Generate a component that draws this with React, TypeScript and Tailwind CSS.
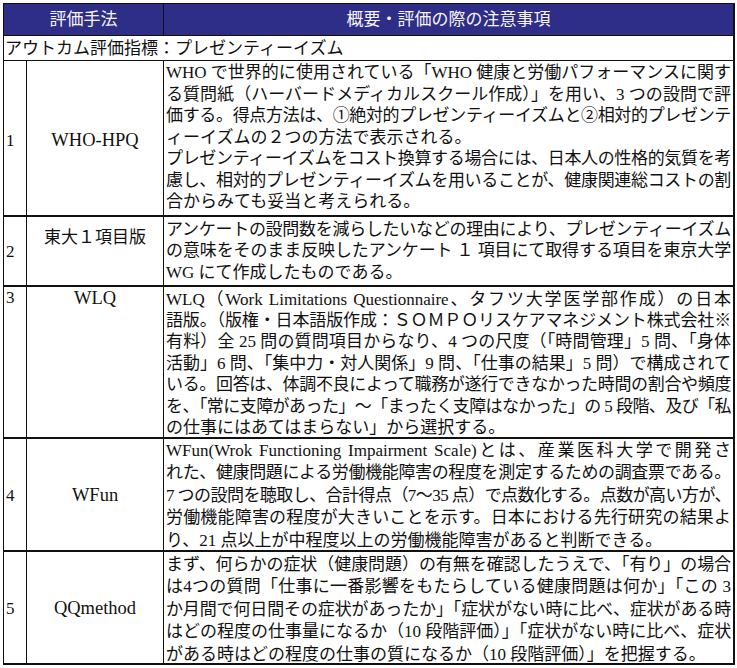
import { useLayoutEffect, useRef, useState } from 'react'

type Row = {
  no: string
  name: string
  h: string
  body: string
  noCell: string
  nameCell: string
  lines: [string, boolean][]
}

const rows: Row[] = [
  {
    no: '1',
    name: 'WHO-HPQ',
    h: 'h-[155px]',
    body: 'pt-[1px] leading-[21.5px] h-[148px]',
    noCell: 'align-middle pt-[5px]',
    nameCell: 'align-middle pt-[5px] text-[18.5px]',
    lines: [
      ['WHO で世界的に使用されている「WHO 健康と労働パフォーマンスに関す', true],
      ['る質問紙（ハーバードメディカルスクール作成）」を用い、3 つの設問で評', true],
      ['価する。得点方法は、①絶対的プレゼンティーイズムと②相対的プレゼンテ', true],
      ['ィーイズムの２つの方法で表示される。', false],
      ['プレゼンティーイズムをコスト換算する場合には、日本人の性格的気質を考', true],
      ['慮し、相対的プレゼンティーイズムを用いることが、健康関連総コストの割', true],
      ['合からみても妥当と考えられる。', false],
    ],
  },
  {
    no: '2',
    name: '東大１項目版',
    h: 'h-[70px]',
    body: 'pt-[2px] leading-[21.5px] h-[62px]',
    noCell: 'align-middle pt-[2px]',
    nameCell: 'align-top pt-[12px]',
    lines: [
      ['アンケートの設問数を減らしたいなどの理由により、プレゼンティーイズム', true],
      ['の意味をそのまま反映したアンケート １ 項目にて取得する項目を東京大学', true],
      ['WG にて作成したものである。', false],
    ],
  },
  {
    no: '3',
    name: 'WLQ',
    h: 'h-[152px]',
    body: 'pt-[2px] leading-[21.4px] h-[145px]',
    noCell: 'align-top pt-[2px]',
    nameCell: 'align-top pt-[2px] text-[18.5px]',
    lines: [
      ['WLQ（Work Limitations Questionnaire、タフツ大学医学部作成）の日本', true],
      ['語版。（版権・日本語版作成：ＳＯＭＰＯリスケアマネジメント株式会社※', true],
      ['有料）全 25 問の質問項目からなり、4 つの尺度（「時間管理」5 問、「身体', true],
      ['活動」6 問、「集中力・対人関係」9 問、「仕事の結果」5 問）で構成されて', true],
      ['いる。回答は、体調不良によって職務が遂行できなかった時間の割合や頻度', true],
      ['を、「常に支障があった」～「まったく支障はなかった」の 5 段階、及び「私', true],
      ['の仕事にはあてはまらない」から選択する。', false],
    ],
  },
  {
    no: '4',
    name: 'WFun',
    h: 'h-[113px]',
    body: 'pt-[1px] leading-[22.6px] h-[106px]',
    noCell: 'align-middle pt-[2px]',
    nameCell: 'align-middle pt-[2px] text-[18.5px]',
    lines: [
      ['WFun(Wrok Functioning Impairment Scale)とは、産業医科大学で開発さ', true],
      ['れた、健康問題による労働機能障害の程度を測定するための調査票である。', true],
      ['7 つの設問を聴取し、合計得点（7～35 点）で点数化する。点数が高い方が、', true],
      ['労働機能障害の程度が大きいことを示す。日本における先行研究の結果よ', true],
      ['り、21 点以上が中程度以上の労働機能障害があると判断できる。', false],
    ],
  },
  {
    no: '5',
    name: 'QQmethod',
    h: 'h-[113px]',
    body: 'pt-[2px] leading-[22.5px] h-[106px]',
    noCell: 'align-middle pt-[2px]',
    nameCell: 'align-middle pt-[2px] text-[18.5px]',
    lines: [
      ['まず、何らかの症状（健康問題）の有無を確認したうえで、「有り」の場合', true],
      ['は4つの質問「仕事に一番影響をもたらしている健康問題は何か」「この 3', true],
      ['か月間で何日間その症状があったか」「症状がない時に比べ、症状がある時', true],
      ['はどの程度の仕事量になるか（10 段階評価）」「症状がない時に比べ、症状', true],
      ['がある時はどの程度の仕事の質になるか（10 段階評価）」を把握する。', false],
    ],
  },
]

// squeezes a line that is too long for the cell, the rest is justified by css
function Line({ text, full }: { text: string; full: boolean }) {
  const ref = useRef<HTMLDivElement>(null)
  const [ls, setLs] = useState<number | null>(null)
  useLayoutEffect(() => {
    const el = ref.current
    if (!el) return
    const over = el.scrollWidth - el.clientWidth
    if (over > 0) setLs(-(over + 1) / [...text].length)
  }, [text])
  return (
    <div
      ref={ref}
      style={ls !== null ? { letterSpacing: ls } : undefined}
      className={full ? 'whitespace-nowrap text-justify [text-align-last:justify]' : 'whitespace-nowrap'}
    >
      {text}
    </div>
  )
}

export default function App() {
  return (
    <div className="bg-white min-h-[668px] pt-[3px] pl-[3px] text-[17px] text-[#111] font-['Liberation_Serif','Noto_Sans_CJK_JP',serif]">
      <table className="w-[732px] table-fixed border-collapse">
        <colgroup>
          <col className="w-[23px]" />
          <col className="w-[137px]" />
          <col />
        </colgroup>
        <thead>
          <tr className="h-[32px] bg-[#2e2d87] text-[#f5f5f5]">
            <th colSpan={2} className="border border-[#111] p-0 font-normal text-center leading-none">評価手法</th>
            <th className="border border-[#111] border-r-2 p-0 font-normal text-center leading-none">概要・評価の際の注意事項</th>
          </tr>
        </thead>
        <tbody>
          <tr className="h-[25px]">
            <td colSpan={3} className="border border-[#111] border-r-2 p-0 pl-[1px] leading-none">
              アウトカム評価指標：プレゼンティーイズム
            </td>
          </tr>
          {rows.map((r) => (
            <tr key={r.no} className={r.h}>
              <td className={`border border-[#111] border-b-2 p-0 pl-[2px] leading-none ${r.noCell}`}>{r.no}</td>
              <td className={`border border-[#111] border-b-2 p-0 text-center leading-none ${r.nameCell}`}>{r.name}</td>
              <td className="border border-[#111] border-b-2 border-r-2 p-0 px-[2px] align-top">
                <div className={r.body}>
                  {r.lines.map(([t, f], i) => (
                    <Line key={i} text={t} full={f} />
                  ))}
                </div>
              </td>
            </tr>
          ))}
        </tbody>
      </table>
    </div>
  )
}
